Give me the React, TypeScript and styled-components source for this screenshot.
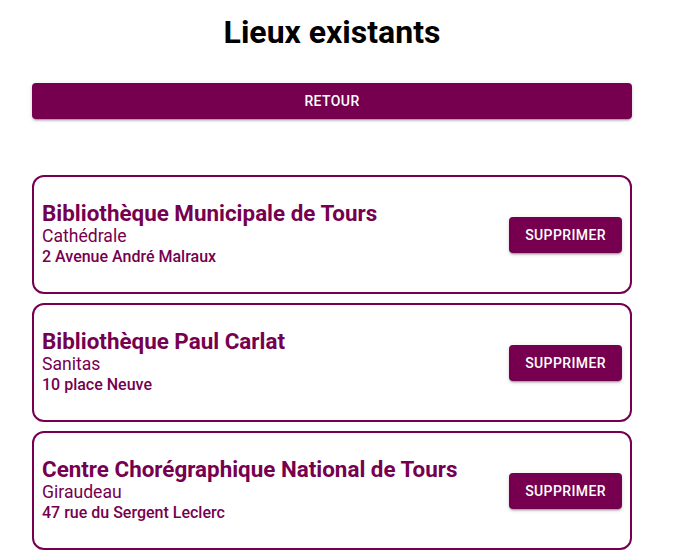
import React from "react";
import styled, { createGlobalStyle } from "styled-components";

const PURPLE = "#76004f";

const GlobalStyle = createGlobalStyle`
  body {
    margin: 0;
    background: #ffffff;
    font-family: Roboto, "Liberation Sans", sans-serif;
  }
`;

const Page = styled.div`
  width: 600px;
  padding: 13px 0 0 32px;
`;

const Title = styled.h1`
  margin: 0;
  font-size: 32px;
  line-height: 38px;
  font-weight: 700;
  text-align: center;
  color: #000;
`;

const Button = styled.button<{ $wide?: boolean }>`
  display: inline-flex;
  align-items: center;
  justify-content: center;
  height: 36px;
  width: ${(p) => (p.$wide ? "100%" : "auto")};
  padding: 6px 16px;
  border: none;
  border-radius: 4px;
  background: ${PURPLE};
  color: #fff;
  font-family: Roboto, "Liberation Sans", sans-serif;
  font-size: 14px;
  font-weight: 500;
  letter-spacing: 0.4px;
  text-transform: uppercase;
  box-shadow: 0px 3px 1px -2px rgba(0, 0, 0, 0.2),
    0px 2px 2px 0px rgba(0, 0, 0, 0.14), 0px 1px 5px 0px rgba(0, 0, 0, 0.12);
  cursor: pointer;
`;

const BackRow = styled.div`
  margin-top: 32px;
`;

const List = styled.div`
  margin-top: 56px;
  display: flex;
  flex-direction: column;
  gap: 9px;
`;

const Card = styled.div`
  box-sizing: border-box;
  min-height: 119px;
  display: flex;
  align-items: center;
  justify-content: space-between;
  padding: 0 8px;
  border: 2px solid ${PURPLE};
  border-radius: 12px;
  color: ${PURPLE};
`;

const Info = styled.div`
  display: flex;
  flex-direction: column;
  margin-top: -2px;
`;

const Name = styled.div`
  font-size: 22.4px;
  line-height: 25px;
  font-weight: 700;
`;

const District = styled.div`
  font-size: 17.6px;
  line-height: 21px;
  font-weight: 400;
`;

const Address = styled.div`
  font-size: 16px;
  line-height: 20px;
  font-weight: 500;
`;

const places = [
  {
    id: "bm",
    name: "Bibliothèque Municipale de Tours",
    district: "Cathédrale",
    address: "2 Avenue André Malraux",
  },
  {
    id: "pc",
    name: "Bibliothèque Paul Carlat",
    district: "Sanitas",
    address: "10 place Neuve",
  },
  {
    id: "ccn",
    name: "Centre Chorégraphique National de Tours",
    district: "Giraudeau",
    address: "47 rue du Sergent Leclerc",
  },
];

const App: React.FC = () => {
  return (
    <Page>
      <GlobalStyle />
      <Title>Lieux existants</Title>
      <BackRow>
        <Button $wide>Retour</Button>
      </BackRow>
      <List>
        {places.map((p) => (
          <Card key={p.id}>
            <Info>
              <Name>{p.name}</Name>
              <District>{p.district}</District>
              <Address>{p.address}</Address>
            </Info>
            <Button>Supprimer</Button>
          </Card>
        ))}
      </List>
    </Page>
  );
};

export default App;
